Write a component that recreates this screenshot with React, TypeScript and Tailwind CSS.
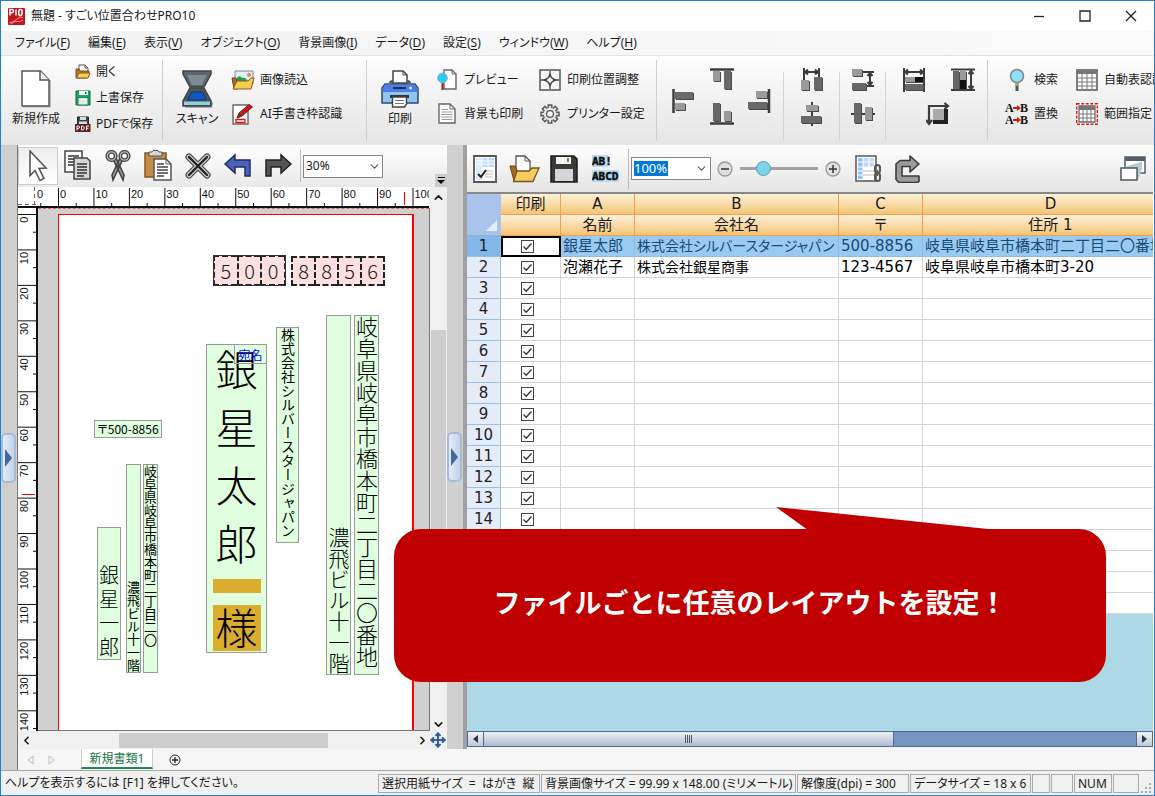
import React from 'react';
import { ChevronDown, ChevronLeft, ChevronRight, ChevronUp, Move } from 'lucide-react';

type Kids = { children?: React.ReactNode };

const Svg = ({ w, h, children }: Kids & { w: number; h: number }) => (
  <svg width={w} height={h} viewBox={`0 0 ${w} ${h}`} className="block shrink-0" aria-hidden="true">
    {children}
  </svg>
);

/* ---------- ribbon icons ---------- */

const LogoIcon = () => (
  <Svg w={17} h={17}>
    <rect width="17" height="17" rx="1" fill="#c4141c" />
    <path d="M2 7.500V1.500h2q1.500 0 1.500 1.600T4 4.800H2M8 1.500v6M10.800 3q0-1.500 1.600-1.500T14 3v3q0 1.500-1.600 1.500T10.800 6z" fill="none" stroke="#fff" strokeWidth="1.500" />
    <path d="M1 15q5-1 8-4t6-1.500M3 16q3-3 6-2.500t6-1.500" fill="none" stroke="#f0a0a0" strokeWidth=".9" />
  </Svg>
);
const NewDocIcon = () => (
  <Svg w={30} h={38}>
    <path d="M2 36.500h27.500V10" stroke="#b9b9b9" strokeWidth="2" fill="none" />
    <path d="M1 1h18.500L28 10v26H1z" fill="#fff" stroke="#555" strokeWidth="1.500" />
    <path d="M19 1v9h9" fill="#eee" stroke="#555" strokeWidth="1.500" />
  </Svg>
);
const OpenSmallIcon = () => (
  <Svg w={16} h={16}>
    <path d="M4 8V1h6l3 3v5H4z" fill="#fff" stroke="#555" />
    <path d="M10 1v3h3" fill="none" stroke="#555" />
    <path d="M1 6v8h11l2-3V7H5L4 5H1z" fill="#b8772a" stroke="#7a4d16" />
    <path d="M4 9h11l-2 5H1.500z" fill="#f5cf58" stroke="#8a5b1c" />
  </Svg>
);
const SaveSmallIcon = () => (
  <Svg w={16} h={16}>
    <path d="M1 1h14v14H1z" fill="#1aa865" stroke="#0c6b3e" />
    <path d="M4 1h9v4H4z" fill="#eefaf2" />
    <path d="M10 2h1.500v2H10z" fill="#0c6b3e" />
    <path d="M3 7.500h10V15H3z" fill="#e8e8e8" stroke="#0c8a50" />
  </Svg>
);
const PdfIcon = () => (
  <Svg w={16} h={17}>
    <path d="M2.500 8V1h11v7" fill="#444" stroke="#222" />
    <path d="M5 1h6v3H5zM4 5.500h8V9H4z" fill="#ddd" />
    <path d="M0 8h15.500v8H0z" fill="#5f1e1e" />
    <path d="M2 14.500V10h1.500q1 0 1 1.200t-1 1.200H2M6.500 10v4h1q1.700 0 1.700-2t-1.700-2zM11.500 14.500V10H14M11.500 12.200h2" fill="none" stroke="#fff" strokeWidth="1" />
  </Svg>
);
const ScannerIcon = () => (
  <Svg w={31} h={38}>
    <path d="M3 37h26l1.500-5" stroke="#aaa" strokeWidth="2" fill="none" />
    <path d="M1 1h28v3l-7 13H8L1 4z" fill="#5c666c" stroke="#3d464b" strokeWidth="1.500" />
    <path d="M5 5h20l-5 10H10z" fill="#7f8b92" />
    <path d="M8 18h14l7 13v5H1v-5z" fill="#4c575e" stroke="#3d464b" strokeWidth="1.500" />
    <path d="M9.500 22h11l4 8h-19z" fill="#0d58c8" stroke="#19324f" />
    <path d="M2 31.500h26V35H2z" fill="#8fd0e0" />
  </Svg>
);
const PictureOpenIcon = () => (
  <Svg w={24} h={21}>
    <path d="M4 1h18v13H4z" fill="#d9effa" stroke="#888" />
    <circle cx="18" cy="5" r="2" fill="#f08a3a" />
    <path d="M5 12V9q3-5 6-1 4-1 6 4z" fill="#2c9a48" />
    <path d="M1 8h4l1 3v8H3z" fill="#a66a22" stroke="#6f4513" />
    <path d="M6 11h11l3-3h3l-3 11H2z" fill="#f4cc55" stroke="#8a5b1c" />
  </Svg>
);
const AiPenIcon = () => (
  <Svg w={22} h={23}>
    <path d="M1 2h15v19H1z" fill="#fff" stroke="#666" strokeWidth="1.400" />
    <path d="M4 16.500h9v3H4z" fill="#fff" stroke="#d11" strokeWidth="1.300" />
    <path d="M5 15l2-5L17 1.500 20.500 4 10 13z" fill="#c91a1a" stroke="#7b1111" />
    <path d="M5 15l2-5 3 3z" fill="#444" />
  </Svg>
);
const PrinterIcon = () => (
  <Svg w={38} h={38}>
    <path d="M12 13V1h10l4 4v8z" fill="#fff" stroke="#444" strokeWidth="1.500" />
    <path d="M22 1v4h4" fill="none" stroke="#444" />
    <path d="M8 13q0-3 4-3v3h14v-3q4 0 4 3z" fill="#555" />
    <path d="M4 14h30l3 4v15H1V18z" fill="#8ec5f2" stroke="#33476a" strokeWidth="1.500" />
    <path d="M4 14.700h30l2.200 3.300v4H1.800v-4z" fill="#4d7fe2" />
    <path d="M12 18h13" stroke="#1f3157" strokeWidth="2" />
    <circle cx="29.500" cy="18" r="1.500" fill="#dfeaff" />
    <path d="M9 25h19v3H9z" fill="#333" />
    <path d="M11.500 27h14v7l-2 3h-12z" fill="#fff" stroke="#444" strokeWidth="1.400" />
    <path d="M14 30.500h9M14 33.500h9" stroke="#777" />
  </Svg>
);
const PreviewIcon = () => (
  <Svg w={20} h={22}>
    <path d="M7 1h8l4 4v15H7z" fill="#fff" stroke="#666" strokeWidth="1.400" />
    <path d="M15 1v4h4" fill="none" stroke="#666" />
    <path d="M5.500 13v8" stroke="#b11818" strokeWidth="2" />
    <circle cx="5.500" cy="9" r="4.800" fill="#25cdf2" stroke="#8ab5c2" />
  </Svg>
);
const TextPageIcon = () => (
  <Svg w={18} h={22}>
    <path d="M1 1h11l5 5v14H1z" fill="#fff" stroke="#666" strokeWidth="1.400" />
    <path d="M12 1v5h5" fill="none" stroke="#666" />
    <path d="M3.500 6.500H10M3.500 9h11M3.500 11.500h11M3.500 14h11M3.500 16.500h11" stroke="#999" />
  </Svg>
);
const PositionIcon = () => (
  <Svg w={22} h={22}>
    <path d="M1 1h20v20H1z" fill="#f6f6f6" stroke="#555" strokeWidth="1.500" />
    <path d="M11 2v4M11 16v4M2 11h4M16 11h4" stroke="#444" strokeWidth="1.300" />
    <path d="M11 5Q12 10 17 11 12 12 11 17 10 12 5 11 10 10 11 5z" fill="#fff" stroke="#444" strokeWidth="1.400" />
  </Svg>
);
const GearIcon = () => (
  <Svg w={20} h={20}>
    {[0, 45, 90, 135].map((a) => (
      <path key={a} d="M8.200 1h3.600v18H8.200z" fill="#ddd" stroke="#555" strokeWidth="1.400" transform={`rotate(${a} 10 10)`} />
    ))}
    <circle cx="10" cy="10" r="6.300" fill="#e6e6e6" />
    <circle cx="10" cy="10" r="3.400" fill="#fff" stroke="#555" strokeWidth="1.300" />
  </Svg>
);

const D = '#686868';
const L = '#9a9a9a';
const K = '#3c3c3c';
const Bar = ({ x, y, w, h, f = D }: { x: number; y: number; w: number; h: number; f?: string }) => (
  <>
    <rect x={x + 1} y={y + 1} width={w} height={h} fill="#4a4a4a" />
    <rect x={x} y={y} width={w} height={h} fill={f} />
  </>
);
const AlignLeftIcon = () => (
  <Svg w={24} h={24}>
    <path d="M1.500 0v24" stroke={K} strokeWidth="2.500" />
    <Bar x={3} y={3} w={18} h={7} />
    <Bar x={3} y={14} w={10} h={7} f={L} />
  </Svg>
);
const AlignRightIcon = () => (
  <Svg w={24} h={24}>
    <path d="M22 0v24" stroke={K} strokeWidth="2.500" />
    <Bar x={9} y={2} w={11} h={7} f={L} />
    <Bar x={1} y={13} w={19} h={7} />
  </Svg>
);
const AlignTopIcon = () => (
  <Svg w={24} h={24}>
    <path d="M0 1.500h24" stroke={K} strokeWidth="2.500" />
    <Bar x={3} y={3} w={7} h={10} f={L} />
    <Bar x={14} y={3} w={7} h={18} />
  </Svg>
);
const AlignBottomIcon = () => (
  <Svg w={24} h={24}>
    <path d="M0 21.500h24" stroke={K} strokeWidth="2.500" />
    <Bar x={3} y={1} w={7} h={18} />
    <Bar x={14} y={9} w={7} h={10} f={L} />
  </Svg>
);
const SpaceHIcon = () => (
  <Svg w={24} h={24}>
    <path d="M4 0v12M19 0v10M5 4h13M8 1.500L5 4l3 2.500M15 1.500L18 4l-3 2.500" fill="none" stroke={K} strokeWidth="2" />
    <Bar x={1} y={12} w={8} h={10} f={L} />
    <Bar x={14} y={9} w={8} h={13} />
  </Svg>
);
const SpaceVIcon = () => (
  <Svg w={24} h={24}>
    <path d="M11 4h12M14 18h9M19 5v12M16.500 8L19 5l2.500 3M16.500 14l2.500 3 2.500-3" fill="none" stroke={K} strokeWidth="2" />
    <Bar x={1} y={1} w={10} h={7} f={L} />
    <Bar x={1} y={15} w={14} h={7} />
  </Svg>
);
const CenterHIcon = () => (
  <Svg w={24} h={24}>
    <path d="M12 0v24" stroke={K} strokeWidth="2" />
    <Bar x={6} y={3} w={12} h={6} f={L} />
    <Bar x={1} y={14} w={20} h={7} />
  </Svg>
);
const CenterVIcon = () => (
  <Svg w={24} h={24}>
    <path d="M0 12h24" stroke={K} strokeWidth="2" />
    <Bar x={3} y={1} w={7} h={20} />
    <Bar x={14} y={5} w={7} h={13} f={L} />
  </Svg>
);
const SameWidthIcon = () => (
  <Svg w={24} h={24}>
    <path d="M2 0v24M22 0v24M3 4h18M6 1.500L3 4l3 2.500M18 1.500L21 4l-3 2.500" fill="none" stroke={K} strokeWidth="2" />
    <Bar x={3} y={9} w={18} h={5} f={L} />
    <rect x="13" y="9" width="8" height="5" fill="#111" />
    <Bar x={3} y={16} w={18} h={6} />
  </Svg>
);
const SameHeightIcon = () => (
  <Svg w={24} h={24}>
    <path d="M0 1.500h24M0 22h24M20 3v18M17.500 6L20 3l2.500 3M17.500 18l2.500 3 2.500-3" fill="none" stroke={K} strokeWidth="2" />
    <Bar x={2} y={3} w={6} h={18} />
    <Bar x={9} y={3} w={6} h={18} f={L} />
    <rect x="9" y="12" width="6" height="9" fill="#111" />
  </Svg>
);
const SameSizeIcon = () => (
  <Svg w={24} h={24}>
    <path d="M3 21V4h18M18.500 1L22 4l-3.500 3M0 18l3 4 3-4" fill="none" stroke={K} strokeWidth="2.200" />
    <rect x="7" y="7" width="15" height="15" fill="#222" />
    <rect x="7" y="7" width="11" height="11" fill="#aaa" />
  </Svg>
);
const SearchIcon = () => (
  <Svg w={22} h={24}>
    <path d="M11 14v9" stroke="#555" strokeWidth="3" />
    <path d="M11 14v4" stroke="#e0c060" strokeWidth="1.500" />
    <circle cx="11" cy="8" r="6.500" fill="#8de0fa" stroke="#808a90" strokeWidth="1.600" />
  </Svg>
);
const ReplaceIcon = () => (
  <svg width="24" height="24" viewBox="0 0 24 24" className="block shrink-0" aria-hidden="true">
    <g fontFamily="Liberation Serif" fontWeight="700" fontSize="12" fill="#111">
      <text x="0" y="10">A</text>
      <text x="15" y="10">B</text>
      <text x="0" y="22">A</text>
      <text x="15" y="22">B</text>
    </g>
    <path d="M8 6h6M8 18h6" stroke="#e11" strokeWidth="2" />
    <path d="M12 3l4 3-4 3zM12 15l4 3-4 3z" fill="#e11" />
  </svg>
);
const GridIcon = () => (
  <Svg w={22} h={22}>
    <path d="M1 1h20v20H1z" fill="#fff" stroke="#555" strokeWidth="1.500" />
    <path d="M1 1h20v4H1z" fill="#777" />
    <path d="M1 9h20M1 13h20M1 17h20M6 5v16M11 5v16M16 5v16" stroke="#777" />
  </Svg>
);
const RangeIcon = () => (
  <Svg w={22} h={22}>
    <path d="M.7.700h20.600v20.600H.7z" fill="#fff" stroke="#e11" strokeWidth="1.400" strokeDasharray="3 1.500" />
    <path d="M3 3h16v16H3z" fill="#fff" stroke="#666" strokeWidth="1.300" />
    <path d="M3 3h16v4H3z" fill="#777" />
    <path d="M3 11h16M3 15h16M7 7v12M11 7v12M15 7v12" stroke="#777" />
  </Svg>
);

/* ---------- editing toolbar icons ---------- */

const CursorIcon = () => (
  <Svg w={20} h={32}>
    <path d="M2 1l16 17-7 .5 5 10-4 2-5-10-5 5z" fill="#fff" stroke="#555" strokeWidth="1.600" />
  </Svg>
);
const CopyIcon = () => (
  <Svg w={28} h={32}>
    <path d="M1 1h17v21H1z" fill="#fff" stroke="#444" strokeWidth="1.500" />
    <path d="M4 6h11M4 9h6M4 12h6M4 15h6" stroke="#333" strokeWidth="1.500" />
    <path d="M10 8h13l3 3v18H10z" fill="#d6d6d6" stroke="#444" strokeWidth="1.500" />
    <path d="M13 14h10M13 17h10M13 20h10M13 23h10M13 26h7" stroke="#333" strokeWidth="1.400" />
  </Svg>
);
const CutIcon = () => (
  <Svg w={26} h={32}>
    <path d="M18 9L8 30l-1-5 8-17zM8 9l10 21 1-5L11 8z" fill="#999" stroke="#444" strokeWidth="1.600" />
    <circle cx="6.500" cy="6" r="4.200" fill="none" stroke="#444" strokeWidth="3.800" />
    <circle cx="6.500" cy="6" r="4.200" fill="none" stroke="#bbb" strokeWidth="1.200" />
    <circle cx="19.500" cy="6" r="4.200" fill="none" stroke="#444" strokeWidth="3.800" />
    <circle cx="19.500" cy="6" r="4.200" fill="none" stroke="#bbb" strokeWidth="1.200" />
    <circle cx="13" cy="16" r="1.200" fill="#444" />
  </Svg>
);
const PasteIcon = () => (
  <Svg w={28} h={32}>
    <path d="M1 3h21v24H1z" fill="#c58a45" stroke="#85551f" strokeWidth="1.500" />
    <path d="M5 2h3l1-1.500h5L15 2h3v4H5z" fill="#d8d8d8" stroke="#555" />
    <path d="M10 9h12l5 5v16H10z" fill="#fff" stroke="#555" strokeWidth="1.500" />
    <path d="M22 9v5h5" fill="none" stroke="#555" />
    <path d="M13 14h7M13 17h11M13 20h11M13 23h11M13 26h7" stroke="#444" strokeWidth="1.300" />
  </Svg>
);
const DeleteIcon = () => (
  <Svg w={26} h={26}>
    <path d="M4 4l18 18M22 4L4 22" stroke="#444" strokeWidth="7" strokeLinecap="round" />
    <path d="M4 4l18 18M22 4L4 22" stroke="#ccc" strokeWidth="4.800" strokeLinecap="round" />
    <path d="M4 4l18 18M22 4L4 22" stroke="#222" strokeWidth="2.400" strokeLinecap="round" />
  </Svg>
);
const UndoIcon = () => (
  <Svg w={28} h={26}>
    <path d="M1 11L11 2v5h15v16h-5v-9H11v6z" fill="#4a63b8" stroke="#1d2c66" strokeWidth="1.500" />
  </Svg>
);
const RedoIcon = () => (
  <Svg w={28} h={26}>
    <path d="M27 11L17 2v5H2v16h5v-9h10v6z" fill="#555" stroke="#222" strokeWidth="1.500" />
  </Svg>
);
const SheetCheckIcon = () => (
  <Svg w={24} h={28}>
    <path d="M1 1h22v26H1z" fill="#fff" stroke="#555" strokeWidth="1.800" />
    <path d="M3 3h18v9H3z" fill="#b9dafc" />
    <path d="M3 3h6v22H3z" fill="#d9eafc" />
    <path d="M3 6h18M3 9h18M9 3v9M15 3v9" stroke="#fff" />
    <path d="M12 16h8M12 19h8M12 22h8" stroke="#bbb" />
    <path d="M5 19l3 3 5-7" fill="none" stroke="#222" strokeWidth="2" />
  </Svg>
);
const OpenBigIcon = () => (
  <Svg w={32} h={28}>
    <path d="M7 18V1h9l5 5v12z" fill="#fff" stroke="#555" strokeWidth="1.300" />
    <path d="M16 1v5h5" fill="none" stroke="#555" />
    <path d="M1 11h5l2 4v11H5z" fill="#a4691f" stroke="#6f4513" />
    <path d="M8 16h12l3-3h7l-6 13.500H4.500z" fill="#f4cc62" stroke="#7a5118" strokeWidth="1.300" />
  </Svg>
);
const SaveBigIcon = () => (
  <Svg w={28} h={28}>
    <path d="M1 1h23l3 3v23H1z" fill="#3a3a3a" stroke="#1d1d1d" strokeWidth="1.500" />
    <path d="M6 2h15v7H6z" fill="#f3f3f3" />
    <path d="M17 3h2v4h-2z" fill="#7a8a33" />
    <path d="M5 14h18v12H5z" fill="#d5d5d5" />
  </Svg>
);
const AbcdIcon = () => (
  <svg width="28" height="30" viewBox="0 0 28 30" className="block shrink-0" aria-hidden="true">
    <path d="M0 1h16v12H0zM0 16h27v12H0z" fill="#b8dcf5" />
    <g fontFamily="DejaVu Sans Mono" fontWeight="700" fontSize="11" fill="#111" stroke="#111" strokeWidth=".5">
      <text x="0" y="11">AB!</text>
      <text x="0" y="26">ABCD</text>
    </g>
  </svg>
);
const SheetLinkIcon = () => (
  <Svg w={28} h={28}>
    <path d="M1 1h20v25H1z" fill="#fff" stroke="#555" strokeWidth="1.500" />
    <path d="M3 3h16v9H3z" fill="#b9dafc" />
    <path d="M3 3h5v21H3z" fill="#8fc2f7" />
    <path d="M3 7h16M3 12h16M3 16h16M3 20h16M8 3v21M14 3v9" stroke="#fff" />
    <path d="M8 16h11M8 20h11" stroke="#bbb" />
    <rect x="20" y="10" width="5" height="8" rx="2.500" fill="none" stroke="#555" strokeWidth="2" />
    <rect x="20" y="18" width="5" height="8" rx="2.500" fill="none" stroke="#555" strokeWidth="2" />
    <path d="M22.500 15v6" stroke="#555" strokeWidth="1.500" />
  </Svg>
);
const ReturnIcon = () => (
  <Svg w={26} h={28}>
    <path d="M5 5.500h10V1l9 8-9 8v-5.500H7v9.500h17v5.500l-2 1H4l-3-3V9z" fill="#9b9b9b" stroke="#3c3c3c" strokeWidth="1.600" strokeLinejoin="round" />
  </Svg>
);
const WindowsIcon = () => (
  <Svg w={26} h={26}>
    <path d="M5 1h20v16H5z" fill="#fff" stroke="#555f66" strokeWidth="1.500" />
    <path d="M5 1h20v4H5z" fill="#555f66" />
    <path d="M2 12L20 6h2v7l-4 11z" fill="#b7ccd4" />
    <path d="M1 12h16v12H1z" fill="#fff" stroke="#4d5960" strokeWidth="1.500" />
  </Svg>
);

/* ---------- ribbon ---------- */

const Sep = () => <div className="mb-1 mt-1 w-px shrink-0 self-stretch bg-[#cfcfcf]" />;
const ShortSep = () => <div className="mb-1 mt-4 w-px shrink-0 self-stretch bg-[#d4d4d4]" />;

const BigButton = ({ icon, label }: { icon: React.ReactNode; label: string }) => (
  <button type="button" className="flex w-12 shrink-0 flex-col items-center gap-[3px] pt-[14px] text-xs leading-4">
    {icon}
    <span className="whitespace-nowrap">{label}</span>
  </button>
);
const RowButton = ({ icon, label, wide = true }: { icon: React.ReactNode; label: string; wide?: boolean }) => (
  <button type="button" className="flex items-center gap-[5px] whitespace-nowrap text-xs leading-4">
    <span className={wide ? 'flex w-6 justify-center' : 'flex w-4 justify-center'}>{icon}</span>
    {label}
  </button>
);
const Pair = ({ children }: Kids) => (
  <div className="grid shrink-0 auto-rows-[34px] content-start justify-items-start pt-[7px]">{children}</div>
);
const Tool = ({ label, children }: Kids & { label: string }) => (
  <button type="button" aria-label={label} className="flex items-center justify-center">
    {children}
  </button>
);

const Ribbon = () => (
  <div className="flex h-[89px] shrink-0 overflow-hidden bg-gradient-to-b from-[#fdfdfd] to-[#e5e5e5]">
    <div className="flex w-[161px] shrink-0 pl-[11px]">
      <BigButton icon={<NewDocIcon />} label="新規作成" />
      <div className="grid auto-rows-[26px] content-start justify-items-start pl-[15px] pt-[3px]">
        <RowButton wide={false} icon={<OpenSmallIcon />} label="開く" />
        <RowButton wide={false} icon={<SaveSmallIcon />} label="上書保存" />
        <RowButton wide={false} icon={<PdfIcon />} label="PDFで保存" />
      </div>
    </div>
    <Sep />
    <div className="flex w-[203px] shrink-0 gap-[10px] pl-[10px]">
      <BigButton icon={<ScannerIcon />} label="スキャン" />
      <Pair>
        <RowButton icon={<PictureOpenIcon />} label="画像読込" />
        <RowButton icon={<AiPenIcon />} label="AI手書き枠認識" />
      </Pair>
    </div>
    <Sep />
    <div className="flex w-[289px] shrink-0 pl-[9px]">
      <BigButton icon={<PrinterIcon />} label="印刷" />
      <div className="w-[114px] shrink-0 pl-[11px]">
        <Pair>
          <RowButton icon={<PreviewIcon />} label="プレビュー" />
          <RowButton icon={<TextPageIcon />} label="背景も印刷" />
        </Pair>
      </div>
      <Pair>
        <RowButton icon={<PositionIcon />} label="印刷位置調整" />
        <RowButton icon={<GearIcon />} label="プリンター設定" />
      </Pair>
    </div>
    <Sep />
    <div className="flex w-[126px] shrink-0 justify-between pl-[15px] pr-3">
      <Tool label="左揃え"><AlignLeftIcon /></Tool>
      <Pair>
        <Tool label="上揃え"><AlignTopIcon /></Tool>
        <Tool label="下揃え"><AlignBottomIcon /></Tool>
      </Pair>
      <Tool label="右揃え"><AlignRightIcon /></Tool>
    </div>
    <ShortSep />
    <div className="flex w-[55px] shrink-0 justify-center">
      <Pair>
        <Tool label="左右等間隔"><SpaceHIcon /></Tool>
        <Tool label="左右中央"><CenterHIcon /></Tool>
      </Pair>
    </div>
    <ShortSep />
    <div className="flex w-[45px] shrink-0 justify-center">
      <Pair>
        <Tool label="上下等間隔"><SpaceVIcon /></Tool>
        <Tool label="上下中央"><CenterVIcon /></Tool>
      </Pair>
    </div>
    <ShortSep />
    <div className="grid w-[101px] shrink-0 auto-rows-[34px] grid-cols-2 content-start pl-[3px] pt-[7px]">
      <Tool label="幅を揃える"><SameWidthIcon /></Tool>
      <Tool label="高さを揃える"><SameHeightIcon /></Tool>
      <div className="col-span-2 grid">
        <Tool label="サイズを揃える"><SameSizeIcon /></Tool>
      </div>
    </div>
    <Sep />
    <div className="flex shrink-0 gap-[17px] pl-[17px]">
      <Pair>
        <RowButton icon={<SearchIcon />} label="検索" />
        <RowButton icon={<ReplaceIcon />} label="置換" />
      </Pair>
      <Pair>
        <RowButton icon={<GridIcon />} label="自動表認識" />
        <RowButton icon={<RangeIcon />} label="範囲指定" />
      </Pair>
    </div>
  </div>
);

/* ---------- rulers ---------- */

const STEP = 35.45;

const TopRuler = () => (
  <svg width="411" height="21" viewBox="18 187 411 21" className="block shrink-0 bg-white text-[11px]" aria-hidden="true" fontFamily="Liberation Sans" fill="#111">
    <path d="M18 204.500h20M34.500 187v20" stroke="#666" strokeDasharray="4 3" />
    <path d="M18 207h411" stroke="#111" strokeWidth="2" />
    <text x="37" y="198">0</text>
    {Array.from({ length: 11 }, (_, i) => (
      <g key={i}>
        <path d={`M${58.5 + i * STEP} 188v19M${58.5 - STEP / 2 + i * STEP} 203v4`} stroke="#111" />
        <text x={60 + i * STEP} y="198">{i * 10}</text>
      </g>
    ))}
    <path d="M404.500 192v13" stroke="#f00" />
  </svg>
);

const SideRuler = () => (
  <svg width="20" height="523" viewBox="18 208 20 523" className="block shrink-0 bg-white text-[11px]" aria-hidden="true" fontFamily="Liberation Sans" fill="#111">
    <path d="M37 208v523" stroke="#111" strokeWidth="2" />
    {Array.from({ length: 15 }, (_, i) => (
      <g key={i}>
        <path d={`M18 ${214.5 + i * STEP}h19M33 ${214.5 + STEP / 2 + i * STEP}h4`} stroke="#111" />
        <text textAnchor="end" transform={`translate(28 ${216.5 + i * STEP}) rotate(-90)`}>{i * 10}</text>
      </g>
    ))}
    <path d="M22 494.500h13" stroke="#f00" />
  </svg>
);

/* ---------- postcard canvas ---------- */

const field = 'absolute border border-[#999] bg-[#dfffdf] text-black';

const Digits = ({ value, className }: { value: string; className: string }) => (
  <div className={`absolute flex border-r-2 border-dashed border-[#222] ${className}`}>
    {value.split('').map((d, i) => (
      <span key={i} className="flex flex-1 items-center justify-center border-y-2 border-l-2 border-dashed border-[#222] bg-[#ffe0e0] text-[20px] leading-5">
        {d}
      </span>
    ))}
  </div>
);

const Canvas = () => (
  <div className="relative min-w-0 flex-1 overflow-hidden border-b border-r border-[#777] bg-[#d0d0d0] font-['Noto_Sans_CJK_JP',sans-serif] font-light">
    <div className="absolute inset-x-0 top-0 border-t border-dashed border-[#d66]" />
    <div className="absolute -bottom-2 left-5 top-[6px] w-[356px] border border-r-2 border-[#f00] bg-white" />
    <Digits value="500" className="left-[175px] top-[47px] h-[31px] w-[73px] outline outline-1 -outline-offset-1 outline-[#333]" />
    <Digits value="8856" className="left-[253px] top-[48px] h-[30px] w-[94px]" />

    <div className={`${field} left-[168px] top-[136px] flex h-[309px] w-[61px] flex-col items-center pt-[2px]`}>
      <div className="flex flex-col items-center gap-4 text-[42px] leading-[42px]">
        {['銀', '星', '太', '郎'].map((c) => (
          <span key={c}>{c}</span>
        ))}
      </div>
      <div className="mt-4 h-[14px] w-12 bg-[#daad2f]" />
      <div className="mt-3 h-[46px] w-12 bg-[#daad2f] text-center text-[42px] leading-[42px]">様</div>
    </div>
    <div className="absolute left-[196px] top-[136px] h-5 w-[33px] border border-[#999] text-center text-[12px] font-normal leading-[19px] text-[#00f]">宛名</div>

    <div className={`${field} left-[238px] top-[119px] flex h-[216px] w-[23px] items-center whitespace-nowrap text-[14px] font-normal leading-[21px] [writing-mode:vertical-rl]`}>
      株式会社シルバースタージャパン
    </div>
    <div className={`${field} left-[288px] top-[107px] h-[360px] w-[25px] text-right text-[21px] leading-[23px] [writing-mode:vertical-rl]`}>
      濃飛ビル十一階
    </div>
    <div className={`${field} left-[316px] top-[107px] h-[360px] w-[25px] whitespace-nowrap text-[22px] leading-[23px] [writing-mode:vertical-rl]`}>
      岐阜県岐阜市橋本町二丁目二〇番地
    </div>

    <div className={`${field} left-[56px] top-[212px] h-[18px] w-[68px] whitespace-nowrap text-center text-[12px] font-normal leading-4`}>〒500-8856</div>
    <div className={`${field} left-[105px] top-[256px] h-[209px] w-[15px] whitespace-nowrap text-[13px] font-normal leading-[13px] [writing-mode:vertical-rl]`}>
      岐阜県岐阜市橋本町二丁目二〇
    </div>
    <div className={`${field} left-[88px] top-[256px] h-[209px] w-[15px] text-right text-[13px] font-normal leading-[13px] [writing-mode:vertical-rl]`}>
      濃飛ビル十一階
    </div>
    <div className={`${field} left-[59px] top-[319px] flex h-[133px] w-6 flex-col items-center justify-end gap-1 pb-[2px] text-[20px] leading-5`}>
      {['銀', '星', '一', '郎'].map((c) => (
        <span key={c}>{c}</span>
      ))}
    </div>
  </div>
);

const DesignPane = () => (
  <section className="flex w-[430px] shrink-0 flex-col border-l border-[#777] bg-[#f0f0f0]">
    <div className="flex h-[42px] shrink-0 items-center bg-gradient-to-b from-white to-[#e9e9e9]">
      {[
        ['選択', <CursorIcon />],
        ['コピー', <CopyIcon />],
        ['切り取り', <CutIcon />],
        ['貼り付け', <PasteIcon />],
        ['削除', <DeleteIcon />],
        ['元に戻す', <UndoIcon />],
        ['やり直し', <RedoIcon />],
      ].map(([label, icon], i) => (
        <button
          key={i}
          type="button"
          aria-label={label as string}
          className={`flex h-[38px] w-10 shrink-0 items-center justify-center ${i === 0 ? 'border border-[#ccc] bg-gradient-to-b from-[#eee] to-white' : ''}`}
        >
          {icon}
        </button>
      ))}
      <div className="mx-[2px] h-8 w-px bg-[#bbb]" />
      <div className="relative w-20">
        <select aria-label="表示倍率" className="block h-[23px] w-full appearance-none border border-[#888] bg-white pl-[2px] text-xs leading-5">
          <option>30%</option>
        </select>
        <ChevronDown className="pointer-events-none absolute right-[2px] top-[5px] h-[13px] w-[13px] text-[#555]" />
      </div>
      <div className="ml-auto flex w-3 flex-col items-center gap-[2px] self-end bg-[#ccc] py-[3px]">
        <div className="h-px w-[7px] bg-black" />
        <div className="border-x-4 border-t-4 border-x-transparent border-t-black" />
      </div>
    </div>
    <div className="flex min-h-0 flex-1">
      <div className="flex w-[412px] flex-col">
        <TopRuler />
        <div className="flex min-h-0 flex-1">
          <div className="shrink-0 overflow-hidden"><SideRuler /></div>
          <Canvas />
        </div>
      </div>
      <div className="flex flex-1 flex-col items-center pt-1">
        <ChevronUp className="h-[13px] w-[13px] shrink-0" strokeWidth={3} />
        <div className="min-h-0 w-[15px] flex-1 pt-[126px]">
          <div className="h-[230px] bg-[#cdcdcd]" />
        </div>
        <ChevronDown className="h-[13px] w-[13px] shrink-0" strokeWidth={3} />
      </div>
    </div>
    <div className="flex h-[18px] shrink-0 items-center">
      <ChevronLeft className="ml-[2px] h-[13px] w-[13px]" strokeWidth={3} />
      <div className="flex-1 pl-[86px]">
        <div className="h-[15px] w-[209px] bg-[#cdcdcd]" />
      </div>
      <ChevronRight className="h-[13px] w-[13px]" strokeWidth={3} />
      <Move className="mx-px h-4 w-4 text-[#2f5f9a]" strokeWidth={3} />
    </div>
  </section>
);

/* ---------- data pane ---------- */

const rows: string[][] = [
  ['銀星太郎', '株式会社シルバースタージャパン', '500-8856', '岐阜県岐阜市橋本町二丁目二〇番地'],
  ['泡瀬花子', '株式会社銀星商事', '123-4567', '岐阜県岐阜市橋本町3-20'],
  ...Array.from({ length: 16 }, () => ['', '', '', '']),
];

const Check = ({ n }: { n: number }) => (
  <label className="grid place-items-center" aria-label={`${n}行目を印刷`}>
    <input type="checkbox" defaultChecked className="peer m-0 h-[13px] w-[13px] appearance-none border border-[#444] bg-white [grid-area:1/1]" />
    <svg width="11" height="11" viewBox="0 0 11 11" className="pointer-events-none hidden [grid-area:1/1] peer-checked:block">
      <path d="M1.500 5.500l2.700 2.700L9.500 2.500" fill="none" stroke="#333" strokeWidth="1.300" />
    </svg>
  </label>
);

const th = 'h-[21px] overflow-hidden border-b border-r border-[#f0a050] bg-gradient-to-b from-[#fdf0da] to-[#f3c572] p-0 text-center font-normal leading-5';

const Grid = () => (
  <table className="w-[calc(100%+26px)] table-fixed border-separate border-spacing-0 font-['DejaVu_Sans','Noto_Sans_CJK_JP',sans-serif] text-[15px] leading-5 [font-feature-settings:'palt']">
    <colgroup>
      <col className="w-[34px]" />
      <col className="w-[60px]" />
      <col className="w-[74px]" />
      <col className="w-[204px]" />
      <col className="w-[84px]" />
      <col />
    </colgroup>
    <thead>
      <tr>
        <th rowSpan={2} className="border-b border-[#8fb0d8] bg-[#a9c3ea] p-0 align-bottom">
          <div className="flex justify-end p-1">
            <div className="border-b-[11px] border-l-[11px] border-b-[#e6eefa] border-l-transparent" />
          </div>
        </th>
        {['印刷', 'A', 'B', 'C', 'D'].map((c) => (
          <th key={c} className={th}>{c}</th>
        ))}
      </tr>
      <tr>
        {['', '名前', '会社名', '〒', '住所 1'].map((c, i) => (
          <th key={i} className={th}>{c}</th>
        ))}
      </tr>
    </thead>
    <tbody>
      {rows.map((r, i) => (
        <tr key={i} className={i === 0 ? 'bg-[#9bcaf0] text-[#174a78]' : 'bg-white text-black'}>
          <th className={`h-[21px] border-b border-r border-[#9dbfe4] p-0 text-center font-normal leading-5 text-[#222] ${i === 0 ? 'bg-[#82b7e8]' : 'bg-[#e4ecf7]'}`}>{i + 1}</th>
          <td className={`bg-white py-0 pl-0 pr-[7px] ${i === 0 ? 'border-2 border-black' : 'border-b border-r border-[#d4d4d4]'}`}>
            <Check n={i + 1} />
          </td>
          {r.map((v, j) => (
            <td
              key={j}
              className={`overflow-hidden whitespace-nowrap border-b border-r py-0 pl-[2px] pr-0 ${j === 1 ? 'text-[14px]' : ''} ${i === 0 ? 'border-[#8bbce4]' : 'border-[#d4d4d4]'}`}
            >
              {v}
            </td>
          ))}
        </tr>
      ))}
    </tbody>
  </table>
);

const RoundButton = ({ label, plus = false }: { label: string; plus?: boolean }) => (
  <button type="button" aria-label={label} className="shrink-0">
    <Svg w={16} h={16}>
      <circle cx="8" cy="8" r="7" fill="#e0e0e0" stroke="#999" strokeWidth="1.300" />
      <path d={plus ? 'M4 8h8M8 4v8' : 'M4 8h8'} stroke="#333" strokeWidth="1.500" />
    </Svg>
  </button>
);

const DataPane = () => (
  <section className="flex min-w-0 flex-1 flex-col border-l-4 border-[#a0a0a0] bg-[#add8e6]">
    <div className="flex h-[49px] shrink-0 items-center border-b-2 border-[#888] bg-gradient-to-b from-white to-[#e4e4e4] pl-1 pr-[7px]">
      <div className="flex w-[157px] shrink-0 items-center">
        <button type="button" aria-label="表示項目" className="flex w-7 justify-center"><SheetCheckIcon /></button>
        <button type="button" aria-label="開く" className="ml-[10px]"><OpenBigIcon /></button>
        <button type="button" aria-label="保存" className="ml-[9px]"><SaveBigIcon /></button>
        <button type="button" aria-label="文字サイズ" className="ml-[14px]"><AbcdIcon /></button>
      </div>
      <div className="mr-[2px] h-10 w-px shrink-0 bg-[#bbb]" />
      <div className="flex h-[23px] w-20 shrink-0 items-center justify-between border border-[#888] bg-white px-[2px]">
        <input aria-label="表の表示倍率" defaultValue="100%" className="h-[15px] w-[34px] bg-[#0078d7] p-0 text-[13px] leading-[15px] text-white outline-none" />
        <button type="button" aria-label="倍率一覧"><ChevronDown className="h-[13px] w-[13px] text-[#555]" /></button>
      </div>
      <div className="ml-[6px] flex items-center gap-[7px]">
        <RoundButton label="縮小" />
        <input
          type="range"
          aria-label="ズーム"
          min={0}
          max={100}
          defaultValue={25}
          className="h-4 w-[78px] appearance-none bg-transparent [&::-webkit-slider-runnable-track]:h-[3px] [&::-webkit-slider-runnable-track]:bg-[#a3a3a3] [&::-webkit-slider-thumb]:-mt-[6px] [&::-webkit-slider-thumb]:h-[15px] [&::-webkit-slider-thumb]:w-[15px] [&::-webkit-slider-thumb]:appearance-none [&::-webkit-slider-thumb]:rounded-full [&::-webkit-slider-thumb]:border [&::-webkit-slider-thumb]:border-[#4a9fb5] [&::-webkit-slider-thumb]:bg-[#7ed3e8]"
        />
        <RoundButton label="拡大" plus />
      </div>
      <button type="button" aria-label="リンク" className="ml-[14px]"><SheetLinkIcon /></button>
      <button type="button" aria-label="反映" className="ml-3"><ReturnIcon /></button>
      <button type="button" aria-label="ウィンドウ切替" className="ml-auto"><WindowsIcon /></button>
    </div>
    <div className="min-h-0 flex-1 overflow-hidden">
      <Grid />
    </div>
    <div className="flex h-[16px] shrink-0 border border-[#50699a] bg-[#7595c0]">
      <button type="button" aria-label="左へ" className="flex w-4 items-center justify-center border-r border-[#50699a] bg-gradient-to-b from-[#f1f4f8] to-[#bfc9d8]">
        <span className="border-y-4 border-r-[5px] border-y-transparent border-r-[#334]" />
      </button>
      <div className="flex w-3/5 items-center justify-center gap-px border-r border-[#50699a] bg-gradient-to-b from-[#eef1f5] to-[#aebccd]">
        {[0, 1, 2, 3].map((i) => (
          <span key={i} className="h-2 w-px bg-[#555]" />
        ))}
      </div>
      <button type="button" aria-label="右へ" className="ml-auto flex w-4 items-center justify-center border-l border-[#50699a] bg-gradient-to-b from-[#f1f4f8] to-[#bfc9d8]">
        <span className="border-y-4 border-l-[5px] border-y-transparent border-l-[#334]" />
      </button>
    </div>
    <div className="h-[2px] shrink-0 bg-[#f5f5f5]" />
  </section>
);

const Handle = ({ label }: { label: string }) => (
  <button
    type="button"
    aria-label={label}
    className="flex h-[50px] w-[15px] items-center justify-center rounded-[5px] border-2 border-[#a9bbd4] bg-gradient-to-r from-[#e3ecf7] to-[#c3d3e8]"
  >
    <span className="border-y-[9px] border-l-[7px] border-y-transparent border-l-[#45699c]" />
  </button>
);

const menus: [string, string][] = [
  ['ファイル', 'F'],
  ['編集', 'E'],
  ['表示', 'V'],
  ['オブジェクト', 'O'],
  ['背景画像', 'I'],
  ['データ', 'D'],
  ['設定', 'S'],
  ['ウィンドウ', 'W'],
  ['ヘルプ', 'H'],
];

const Cell = ({ children, className = '' }: Kids & { className?: string }) => (
  <div className={`h-[19px] shrink-0 whitespace-pre border border-[#aaa] px-[3px] leading-[17px] ${className}`}>{children}</div>
);

export default function App() {
  return (
    <div className="flex h-screen flex-col overflow-hidden border border-[#1a80d8] bg-white font-['Noto_Sans','Noto_Sans_CJK_JP',sans-serif] text-xs text-[#1a1a1a] [font-feature-settings:'palt']">
      <header className="flex h-[30px] shrink-0 items-center pl-[7px]">
        <LogoIcon />
        <h1 className="ml-[6px] text-xs leading-4">無題 - すごい位置合わせPRO10</h1>
        <div className="ml-auto flex items-center text-[#222]">
          <button type="button" aria-label="最小化" className="flex w-[46px] justify-center"><Svg w={12} h={12}><path d="M1 6.500h10" stroke="#222" strokeWidth="1.300" /></Svg></button>
          <button type="button" aria-label="最大化" className="flex w-[46px] justify-center"><Svg w={12} h={12}><path d="M1 1h10v10H1z" fill="none" stroke="#222" strokeWidth="1.300" /></Svg></button>
          <button type="button" aria-label="閉じる" className="flex w-[46px] justify-center"><Svg w={12} h={12}><path d="M1 1l10 10M11 1L1 11" stroke="#222" strokeWidth="1.300" /></Svg></button>
        </div>
      </header>
      <nav className="flex h-[25px] shrink-0 items-center gap-[18px] border-b border-[#d5e5f2] bg-gradient-to-r from-[#f2f2f2] to-[#fafafa] pl-[14px]">
        {menus.map(([name, key]) => (
          <button key={key} type="button" className="whitespace-nowrap leading-4">
            {name}(<span className="underline underline-offset-2">{key}</span>)
          </button>
        ))}
      </nav>
      <Ribbon />
      <main className="relative flex min-h-0 flex-1">
        <div className="w-4 shrink-0 bg-[#cfcfcf] pt-[288px]">
          <Handle label="左パネルを開く" />
        </div>
        <div className="flex min-w-0 flex-1 flex-col">
          <div className="flex min-h-0 flex-1 pr-px">
            <DesignPane />
            <div className="w-4 shrink-0 bg-[#d0d0d0] pt-[287px]">
              <Handle label="データを開く" />
            </div>
            <DataPane />
          </div>
          <div className="flex h-[21px] shrink-0 items-center border-l border-[#777] bg-[#f5f5f5]">
            <div className="flex w-[63px] gap-[14px] pl-[9px]">
              <Svg w={7} h={10}><path d="M6 1L1 5l5 4z" fill="none" stroke="#bbb" /></Svg>
              <Svg w={7} h={10}><path d="M1 1l5 4-5 4z" fill="none" stroke="#bbb" /></Svg>
            </div>
            <button type="button" className="h-[20px] w-[72px] self-start border-x border-b-2 border-x-[#ccc] border-b-[#1f8a55] bg-white leading-[19px] text-[#217346]">新規書類1</button>
            <button type="button" aria-label="書類を追加" className="ml-4">
              <Svg w={12} h={12}>
                <circle cx="6" cy="6" r="5" fill="none" stroke="#222" />
                <path d="M3 6h6M6 3v6" stroke="#222" strokeWidth="1.300" />
              </Svg>
            </button>
          </div>
        </div>

        <div className="absolute left-[393px] right-12 top-[384px] flex h-[153px] items-center justify-center rounded-[27px] bg-[#c00000] pb-2">
          <svg width="216" height="26" viewBox="0 0 216 26" className="absolute -top-[22px] left-[382px]" aria-hidden="true">
            <path d="M0 0L212 22v4H36z" fill="#c00000" />
          </svg>
          <p className="relative whitespace-nowrap font-['Noto_Sans_CJK_JP',sans-serif] text-[27px] font-bold leading-9 text-white [font-feature-settings:normal]">
            ファイルごとに任意のレイアウトを設定！
          </p>
        </div>
      </main>
      <footer className="flex h-[25px] shrink-0 items-center gap-px border-t border-[#a8a8a8] bg-[#f0f0f0] pl-1">
        <p className="mr-auto whitespace-nowrap leading-4">ヘルプを表示するには [F1] を押してください。</p>
        <Cell className="w-[162px]">{'選択用紙サイズ  =  はがき  縦'}</Cell>
        <Cell className="w-[255px]">背景画像サイズ = 99.99 x 148.00 (ミリメートル)</Cell>
        <Cell className="w-[112px]">解像度(dpi) = 300</Cell>
        <Cell className="w-[121px]">データサイズ = 18 x 6</Cell>
        <Cell className="w-[18px]" />
        <Cell className="w-[22px]" />
        <Cell className="w-[38px]">NUM</Cell>
        <Cell className="w-[26px]" />
        <div className="self-end">
          <Svg w={14} h={14}>
            <path d="M9 2h2v2H9zM9 6h2v2H9zM5 6h2v2H5zM9 10h2v2H9zM5 10h2v2H5zM1 10h2v2H1z" fill="#aaa" />
          </Svg>
        </div>
      </footer>
    </div>
  );
}
